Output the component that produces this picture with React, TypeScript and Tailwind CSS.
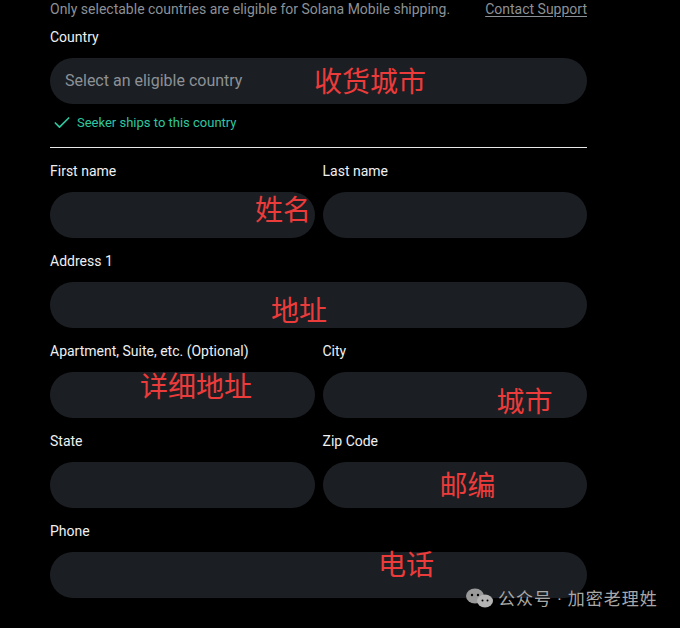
import { Check } from 'lucide-react'

type FieldProps = {
    label: string
    note?: string
    noteClass?: string
}

function Field({ label, note, noteClass }: FieldProps) {
    return (
        <div className="flex flex-col gap-[11px]">
            <div className="text-[14px] leading-5 text-[#eef0f2]">{label}</div>
            <div className="relative h-[46px] rounded-full bg-[#1b1f23]">
                {note && (
                    <span className={`absolute text-[28px] leading-7 text-[#ec3b3b] ${noteClass}`}>
                        {note}
                    </span>
                )}
            </div>
        </div>
    )
}

export default function App() {
    return (
        <div
            className="relative h-[628px] w-[680px] overflow-hidden bg-black"
            style={{ fontFamily: 'Roboto, "Noto Sans CJK SC", sans-serif' }}
        >
            <div className="ml-[50px] mt-[-1px] flex w-[537px] flex-col">
                <div className="flex items-center justify-between text-[14px] leading-5 text-[#8c9197]">
                    <span>Only selectable countries are eligible for Solana Mobile shipping.</span>
                    <span className="underline underline-offset-2">Contact Support</span>
                </div>

                <div className="mt-[8px] text-[14px] leading-5 text-[#eef0f2]">Country</div>
                <div className="relative mt-[11px] flex h-[46px] items-center rounded-full bg-[#1b1f23] px-[15px]">
                    <span className="text-[16px] text-[#8c9197]">Select an eligible country</span>
                    <span className="absolute left-[264px] top-[11px] text-[28px] leading-7 text-[#ec3b3b]">
                        收货城市
                    </span>
                </div>

                <div className="mt-[9px] flex items-center gap-[5px] pl-[2px] text-[13px] leading-5 text-[#2fc79f]">
                    <Check className="h-[20px] w-[20px]" strokeWidth={2} />
                    <span>Seeker ships to this country</span>
                </div>

                <div className="mt-[14px] h-px bg-[#e8e8e8]" />

                <div className="mt-[13px] flex flex-col gap-[13px]">
                    <div className="grid grid-cols-2 gap-2">
                        <Field label="First name" note="姓名" noteClass="left-[205px] top-[5px]" />
                        <Field label="Last name" />
                    </div>
                    <Field label="Address 1" note="地址" noteClass="left-[221px] top-[16px]" />
                    <div className="grid grid-cols-2 gap-2">
                        <Field
                            label="Apartment, Suite, etc. (Optional)"
                            note="详细地址"
                            noteClass="left-[90px] top-[2px]"
                        />
                        <Field label="City" note="城市" noteClass="left-[174px] top-[17px]" />
                    </div>
                    <div className="grid grid-cols-2 gap-2">
                        <Field label="State" />
                        <Field label="Zip Code" note="邮编" noteClass="left-[117px] top-[11px]" />
                    </div>
                    <Field label="Phone" note="电话" noteClass="left-[328px] top-[0px]" />
                </div>
            </div>

            {/* watermark */}
            <div className="absolute left-[464px] top-[586px] flex items-center text-[17px] leading-6 text-[#a8a8a8]">
                <svg width="36" height="26" viewBox="0 0 36 26" className="mr-[-2px]">
                    <ellipse cx="11" cy="10" rx="9" ry="7.5" fill="#9a9a9a" />
                    <ellipse cx="21" cy="15" rx="8" ry="6.5" fill="#b4b4b4" />
                    <circle cx="8" cy="9" r="1.2" fill="#000" />
                    <circle cx="14" cy="9" r="1.2" fill="#000" />
                    <circle cx="18.5" cy="14.5" r="1" fill="#000" />
                    <circle cx="23.5" cy="14.5" r="1" fill="#000" />
                </svg>
                <span className="tracking-[1px]">公众号 · 加密老理姓</span>
            </div>
        </div>
    )
}
